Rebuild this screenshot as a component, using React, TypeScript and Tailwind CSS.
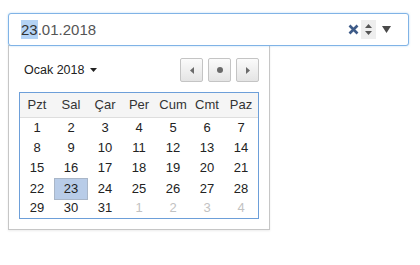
import React from "react";

const days = ["Pzt", "Sal", "Çar", "Per", "Cum", "Cmt", "Paz"];

type Day = { n: number; other?: boolean; selected?: boolean };

const weeks: Day[][] = [
  [1, 2, 3, 4, 5, 6, 7].map((n) => ({ n })),
  [8, 9, 10, 11, 12, 13, 14].map((n) => ({ n })),
  [15, 16, 17, 18, 19, 20, 21].map((n) => ({ n })),
  [22, 23, 24, 25, 26, 27, 28].map((n) => ({ n, selected: n === 23 })),
  [
    { n: 29 },
    { n: 30 },
    { n: 31 },
    { n: 1, other: true },
    { n: 2, other: true },
    { n: 3, other: true },
    { n: 4, other: true },
  ],
];

function NavButton({ children }: { children: React.ReactNode }) {
  return (
    <button className="w-[23px] h-[24px] flex items-center justify-center rounded-[2px] border border-[#c4c4c4] bg-gradient-to-b from-[#fbfbfb] to-[#e4e4e4]">
      {children}
    </button>
  );
}

export default function App() {
  return (
    <div className="relative w-[420px] h-[265px] bg-white font-['Liberation_Sans',Arial,sans-serif] pt-[13px] pl-[8px]">
      {/* input */}
      <div className="relative z-10 w-[401px] h-[33px] flex items-center border border-[#80b3e6] rounded-[3px] bg-white shadow-[0_0_2px_rgba(102,175,233,0.5)] pl-[12px] pr-[17px]">
        <div className="text-[15px] text-[#555] leading-none">
          <span className="bg-[#b4d3f5] text-[#333] py-[1px]">23</span>.01.2018
        </div>
        <div className="ml-auto flex items-center">
          <svg width="11" height="11" viewBox="0 0 11 11" className="mr-[2px]">
            <path d="M1.5 1.5 L9.5 9.5 M9.5 1.5 L1.5 9.5" stroke="#3e5b88" strokeWidth="2.6" />
          </svg>
          <div className="w-[15px] h-[19px] bg-[#eeeeee] flex flex-col items-center justify-center gap-[3px]">
            <svg width="7" height="4" viewBox="0 0 7 4">
              <path d="M0 4 L3.5 0 L7 4 Z" fill="#555" />
            </svg>
            <svg width="7" height="4" viewBox="0 0 7 4">
              <path d="M0 0 L3.5 4 L7 0 Z" fill="#555" />
            </svg>
          </div>
          <svg width="9" height="7" viewBox="0 0 9 7" className="ml-[6px]">
            <path d="M0 0 L9 0 L4.5 7 Z" fill="#4a4a4a" />
          </svg>
        </div>
      </div>

      {/* popup */}
      <div className="absolute left-[8px] top-[45px] w-[262px] h-[185px] border border-[#c6c6c6] bg-white shadow-[0_1px_2px_rgba(0,0,0,0.08)] px-[10px] pt-[12px]">
        <div className="flex items-center justify-between">
          <div className="flex items-center gap-[6px] pl-[5px] text-[12.5px] text-[#222]">
            Ocak 2018
            <svg width="7" height="4" viewBox="0 0 7 4">
              <path d="M0 0 L7 0 L3.5 4 Z" fill="#222" />
            </svg>
          </div>
          <div className="flex gap-[5px]">
            <NavButton>
              <svg width="4" height="7" viewBox="0 0 4 7">
                <path d="M4 0 L0 3.5 L4 7 Z" fill="#6a6a6a" />
              </svg>
            </NavButton>
            <NavButton>
              <span className="w-[6px] h-[6px] rounded-full bg-[#6a6a6a]" />
            </NavButton>
            <NavButton>
              <svg width="4" height="7" viewBox="0 0 4 7">
                <path d="M0 0 L4 3.5 L0 7 Z" fill="#6a6a6a" />
              </svg>
            </NavButton>
          </div>
        </div>

        <div className="mt-[10px] w-[240px] border border-[#6d9fd9]">
          <div className="grid grid-cols-7 h-[25px] items-center bg-[#f5f5f5] border-b border-[#dedede] text-[13px] text-[#333]">
            {days.map((d) => (
              <div key={d} className="text-center">
                {d}
              </div>
            ))}
          </div>
          {weeks.map((w, i) => (
            <div key={i} className="grid grid-cols-7 h-[20px] text-[13px]">
              {w.map((d, j) => (
                <div
                  key={j}
                  className={
                    d.selected
                      ? "flex items-center justify-center bg-[#b8cce8] border border-[#a9b6c8] text-[#222]"
                      : d.other
                      ? "flex items-center justify-center text-[#c2c2c2]"
                      : "flex items-center justify-center text-[#222]"
                  }
                >
                  {d.n}
                </div>
              ))}
            </div>
          ))}
        </div>
      </div>
    </div>
  );
}
